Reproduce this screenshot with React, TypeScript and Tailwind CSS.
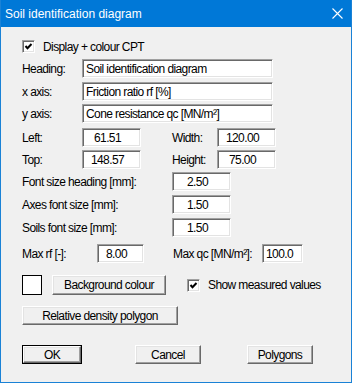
import { FC, ReactNode } from "react";

const sunken =
  "border border-t-[#a0a0a0] border-l-[#a0a0a0] border-r-white border-b-white shadow-[inset_1px_1px_0_#696969,inset_-1px_-1px_0_#e3e3e3]";
const raised =
  "border border-t-white border-l-white border-r-[#696969] border-b-[#696969] shadow-[inset_-1px_-1px_0_#a0a0a0,inset_1px_1px_0_#e3e3e3]";

const Field: FC<{ value: string; w: string; center?: boolean }> = ({ value, w, center }) => (
  <div
    className={`${w} h-[19px] bg-white ${sunken} flex items-center whitespace-nowrap overflow-hidden ${
      center ? "justify-center pr-2" : "pl-[3px]"
    }`}
  >
    {value}
  </div>
);

const Btn: FC<{ children: ReactNode; w: string; h?: string; def?: boolean }> = ({ children, w, h = "h-[19px]", def }) =>
  def ? (
    <div className={`${w} ${h} border border-black`}>
      <div className={`w-full h-full bg-[#f0f0f0] ${raised} flex items-center justify-center`}>{children}</div>
    </div>
  ) : (
    <div className={`${w} ${h} bg-[#f0f0f0] ${raised} flex items-center justify-center`}>{children}</div>
  );

const Check: FC = () => (
  <div className={`w-[13px] h-[13px] bg-white ${sunken} flex items-center justify-center shrink-0`}>
    <svg width="9" height="9" viewBox="0 0 9 9">
      <polyline points="1.5,4 3.5,6.2 7.5,2" fill="none" stroke="#000" strokeWidth="2" />
    </svg>
  </div>
);

const Label: FC<{ children: ReactNode; w: string; className?: string }> = ({ children, w, className = "" }) => (
  <div className={`${w} shrink-0 whitespace-nowrap ${className}`}>{children}</div>
);

export default function App() {
  return (
    <div className="w-[352px] h-[383px] bg-[#f0f0f0] border border-t-0 border-[#1a82d6] flex flex-col font-['Liberation_Sans',Arial,sans-serif] text-[12px] tracking-[-0.6px] text-black">
      <div className="h-[27px] bg-[#0078d7] flex items-center justify-between pl-[4px] pr-[8px] text-white text-[12px] tracking-normal">
        <span>Soil identification diagram</span>
        <svg width="11" height="11" viewBox="0 0 11 11">
          <path d="M0.5 0.5 L10.5 10.5 M10.5 0.5 L0.5 10.5" stroke="#fff" strokeWidth="1.1" />
        </svg>
      </div>

      <div className="flex flex-col pl-[21px] pt-[13px]">
        <div className="flex items-center h-[13px]">
          <Check />
          <span className="ml-[8px]">Display + colour CPT</span>
        </div>

        <div className="flex items-center mt-[6px]">
          <Label w="w-[60px]">Heading:</Label>
          <Field value="Soil identification diagram" w="w-[191px]" />
        </div>
        <div className="flex items-center mt-[4px]">
          <Label w="w-[60px]">x axis:</Label>
          <Field value="Friction ratio rf [%]" w="w-[191px]" />
        </div>
        <div className="flex items-center mt-[3px]">
          <Label w="w-[60px]">y axis:</Label>
          <Field value="Cone resistance qc [MN/m²]" w="w-[191px]" />
        </div>

        <div className="flex items-center mt-[5px]">
          <Label w="w-[60px]">Left:</Label>
          <Field value="61.51" w="w-[59px]" center />
          <Label w="w-[45px]" className="ml-[31px]">Width:</Label>
          <Field value="120.00" w="w-[59px]" center />
        </div>
        <div className="flex items-center mt-[3px]">
          <Label w="w-[60px]">Top:</Label>
          <Field value="148.57" w="w-[59px]" center />
          <Label w="w-[45px]" className="ml-[31px]">Height:</Label>
          <Field value="75.00" w="w-[59px]" center />
        </div>

        <div className="flex items-center mt-[3px]">
          <Label w="w-[150px]">Font size heading [mm]:</Label>
          <Field value="2.50" w="w-[59px]" center />
        </div>
        <div className="flex items-center mt-[4px]">
          <Label w="w-[150px]">Axes font size [mm]:</Label>
          <Field value="1.50" w="w-[59px]" center />
        </div>
        <div className="flex items-center mt-[4px]">
          <Label w="w-[150px]">Soils font size [mm]:</Label>
          <Field value="1.50" w="w-[59px]" center />
        </div>

        <div className="flex items-center mt-[7px]">
          <Label w="w-[75px]">Max rf [-]:</Label>
          <Field value="8.00" w="w-[47px]" center />
          <Label w="w-[89px]" className="ml-[29px]">Max qc [MN/m²]:</Label>
          <Field value="100.0" w="w-[41px]" />
        </div>

        <div className="flex items-center mt-[12px]">
          <div className="w-[20px] h-[20px] bg-white border border-black shrink-0" />
          <div className="ml-[10px]">
            <Btn w="w-[114px]" h="h-[20px]">Background colour</Btn>
          </div>
          <div className="ml-[21px] flex items-center">
            <Check />
            <span className="ml-[8px]">Show measured values</span>
          </div>
        </div>

        <div className="mt-[11px]">
          <Btn w="w-[156px]">Relative density polygon</Btn>
        </div>

        <div className="flex items-center mt-[20px]">
          <Btn w="w-[60px]" def>
            OK
          </Btn>
          <div className="ml-[53px]">
            <Btn w="w-[66px]">Cancel</Btn>
          </div>
          <div className="ml-[46px]">
            <Btn w="w-[66px]">Polygons</Btn>
          </div>
        </div>
      </div>
    </div>
  );
}
